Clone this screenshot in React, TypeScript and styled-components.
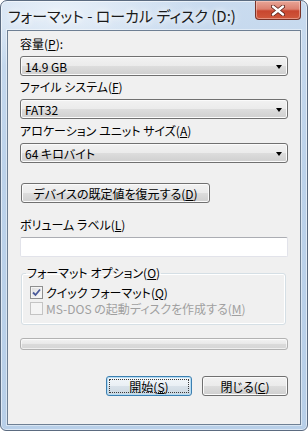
import styled, { createGlobalStyle } from "styled-components";

const GlobalStyle = createGlobalStyle`
  html, body {
    margin: 0;
    padding: 0;
    background: #ffffff;
  }
  body {
    font-family: "Noto Sans CJK JP", "Liberation Sans", sans-serif;
    font-size: 12px;
    color: #000;
  }
`;

const Window = styled.div`
  box-sizing: border-box;
  width: 308px;
  height: 431px;
  border: 1px solid #5b6b80;
  border-radius: 7px 7px 6px 6px;
  padding: 0 6px 5px 6px;
  display: flex;
  flex-direction: column;
  background:
    radial-gradient(ellipse 140px 60px at 60px 10px, rgba(236, 243, 250, 0.9), rgba(236, 243, 250, 0) 100%),
    linear-gradient(to bottom, #c9dbef 0%, #bcd2ea 40%, #b8cfe8 100%);
  box-shadow: inset 0 0 0 1px rgba(255, 255, 255, 0.55);
`;

const TitleBar = styled.div`
  height: 29px;
  display: flex;
  align-items: center;
  flex-shrink: 0;
`;

const Title = styled.div`
  padding-left: 1px;
  font-size: 15px;
  font-feature-settings: "palt";
  color: #1a1a1a;
  text-shadow: 0 0 6px #ffffff, 0 0 10px rgba(255, 255, 255, 0.9);
  white-space: nowrap;
`;

const CloseButton = styled.div`
  box-sizing: border-box;
  margin-left: auto;
  align-self: flex-start;
  width: 46px;
  height: 19px;
  border: 1px solid #7a3328;
  border-top: none;
  border-radius: 0 0 4px 4px;
  display: flex;
  align-items: center;
  justify-content: center;
  background: linear-gradient(
    to bottom,
    #e8a597 0%,
    #dc8170 45%,
    #c8462f 55%,
    #d0583c 100%
  );
  box-shadow: inset 0 0 0 1px rgba(255, 220, 210, 0.45);
`;

const Client = styled.div`
  box-sizing: border-box;
  flex: 1;
  border: 1px solid #6e7f93;
  background: #f0f0f0;
  padding: 5px 12px 0 12px;
  display: flex;
  flex-direction: column;
  box-shadow: 0 0 0 1px rgba(255, 255, 255, 0.45);
`;

const Label = styled.div<{ $top?: number }>`
  height: 16px;
  line-height: 16px;
  margin-top: ${(p) => p.$top ?? 0}px;
  font-feature-settings: "palt";
  white-space: nowrap;
`;

const Key = styled.span`
  text-decoration: underline;
  text-underline-offset: 1px;
`;

const Combo = styled.div`
  box-sizing: border-box;
  margin-top: 4px;
  height: 20px;
  border: 1px solid #707070;
  border-radius: 3px;
  padding: 0 5px 0 4px;
  display: flex;
  align-items: center;
  background: linear-gradient(
    to bottom,
    #f2f2f2 0%,
    #ebebeb 50%,
    #dddddd 51%,
    #cfcfcf 100%
  );
  box-shadow: inset 0 0 0 1px #fbfbfb;
`;

const ComboText = styled.span`
  flex: 1;
  font-feature-settings: "palt";
  white-space: nowrap;
`;

const Arrow = styled.span`
  width: 0;
  height: 0;
  border-left: 3.5px solid transparent;
  border-right: 3.5px solid transparent;
  border-top: 4px solid #000;
  margin-top: 1px;
`;

const Button = styled.div<{ $default?: boolean; $width?: number; $top?: number }>`
  box-sizing: border-box;
  width: ${(p) => p.$width ?? 86}px;
  height: 20px;
  margin-top: ${(p) => p.$top ?? 0}px;
  border: 1px solid ${(p) => (p.$default ? "#3c7fb1" : "#707070")};
  border-radius: 3px;
  display: flex;
  align-items: center;
  justify-content: center;
  font-feature-settings: "palt";
  white-space: nowrap;
  background: ${(p) =>
    p.$default
      ? "linear-gradient(to bottom, #f3f7fa 0%, #e9eff4 50%, #d9e2ea 51%, #ccd7e0 100%)"
      : "linear-gradient(to bottom, #f2f2f2 0%, #ebebeb 50%, #dddddd 51%, #cfcfcf 100%)"};
  box-shadow: inset 0 0 0 1px ${(p) => (p.$default ? "#b5dcf3" : "#fbfbfb")};
  outline: ${(p) => (p.$default ? "1px dotted #3a3a3a" : "none")};
  outline-offset: -4px;
`;

const TextInput = styled.div`
  box-sizing: border-box;
  margin-top: 4px;
  height: 20px;
  background: #ffffff;
  border: 1px solid #e2e3ea;
  border-top-color: #abadb3;
  border-radius: 2px;
`;

const Group = styled.fieldset`
  margin: 8px 0 0 1px;
  width: 265px;
  box-sizing: border-box;
  padding: 0 4px 8px 4px;
  border: 1px solid #d5dfe5;
  border-radius: 3px;
  box-shadow: inset 0 0 0 1px #ffffff;
`;

const Legend = styled.legend`
  padding: 0 1px;
  height: 16px;
  line-height: 16px;
  font-feature-settings: "palt";
  white-space: nowrap;
`;

const CheckRow = styled.div<{ $disabled?: boolean; $top?: number }>`
  display: flex;
  align-items: center;
  height: 16px;
  margin-top: ${(p) => p.$top ?? 0}px;
  padding-left: 4px;
  color: ${(p) => (p.$disabled ? "#a0a0a0" : "#000")};
  font-feature-settings: "palt";
  white-space: nowrap;
`;

const CheckBox = styled.span<{ $disabled?: boolean }>`
  box-sizing: border-box;
  width: 13px;
  height: 13px;
  margin-right: 3px;
  border: 1px solid ${(p) => (p.$disabled ? "#c4c4c4" : "#8e8f8f")};
  display: flex;
  align-items: center;
  justify-content: center;
  background: ${(p) =>
    p.$disabled
      ? "#f4f4f4"
      : "linear-gradient(135deg, #dcdcdc 0%, #f0f0f0 60%, #fcfcfc 100%)"};
  box-shadow: inset 0 0 0 1px ${(p) => (p.$disabled ? "#f4f4f4" : "#f4f4f4")};
`;

const Progress = styled.div`
  box-sizing: border-box;
  margin-top: 13px;
  height: 12px;
  border: 1px solid #b2b2b2;
  border-radius: 3px;
  background: linear-gradient(
    to bottom,
    #f3f3f3 0%,
    #e9e9e9 45%,
    #dadada 55%,
    #d6d6d6 100%
  );
  box-shadow: inset 0 0 0 1px rgba(255, 255, 255, 0.6);
`;

const ButtonRow = styled.div`
  margin-top: 26px;
  display: flex;
  justify-content: flex-end;
  gap: 10px;
`;

const CloseGlyph = () => (
  <svg width="14" height="11" viewBox="0 0 14 11">
    <path
      d="M2 1.5 L12 9.5 M12 1.5 L2 9.5"
      stroke="#5a2018"
      strokeWidth="4"
      strokeLinecap="round"
      fill="none"
    />
    <path
      d="M2 1.5 L12 9.5 M12 1.5 L2 9.5"
      stroke="#ffffff"
      strokeWidth="2.4"
      strokeLinecap="round"
      fill="none"
    />
  </svg>
);

const CheckMark = () => (
  <svg width="9" height="9" viewBox="0 0 9 9">
    <path
      d="M1 4.5 L3.5 7 L8 1.5"
      stroke="#4a5a9a"
      strokeWidth="1.8"
      fill="none"
    />
  </svg>
);

const App = () => {
  return (
    <>
      <GlobalStyle />
      <Window>
        <TitleBar>
          <Title>フォーマット - ローカル ディスク (D:)</Title>
          <CloseButton>
            <CloseGlyph />
          </CloseButton>
        </TitleBar>

        <Client>
          <Label>
            容量(<Key>P</Key>):
          </Label>
          <Combo>
            <ComboText>14.9 GB</ComboText>
            <Arrow />
          </Combo>

          <Label $top={3}>
            ファイル システム(<Key>F</Key>)
          </Label>
          <Combo>
            <ComboText>FAT32</ComboText>
            <Arrow />
          </Combo>

          <Label $top={4}>
            アロケーション ユニット サイズ(<Key>A</Key>)
          </Label>
          <Combo>
            <ComboText>64 キロバイト</ComboText>
            <Arrow />
          </Combo>

          <Button $width={189} $top={20} style={{ marginLeft: 1 }}>
            デバイスの既定値を復元する(<Key>D</Key>)
          </Button>

          <Label $top={14}>
            ボリューム ラベル(<Key>L</Key>)
          </Label>
          <TextInput />

          <Group>
            <Legend>
              フォーマット オプション(<Key>O</Key>)
            </Legend>
            <CheckRow $top={3}>
              <CheckBox>
                <CheckMark />
              </CheckBox>
              クイック フォーマット(<Key>Q</Key>)
            </CheckRow>
            <CheckRow $disabled>
              <CheckBox $disabled />
              MS-DOS の起動ディスクを作成する(<Key>M</Key>)
            </CheckRow>
          </Group>

          <Progress />

          <ButtonRow>
            <Button $default>
              開始(<Key>S</Key>)
            </Button>
            <Button>
              閉じる(<Key>C</Key>)
            </Button>
          </ButtonRow>
        </Client>
      </Window>
    </>
  );
};

export default App;
